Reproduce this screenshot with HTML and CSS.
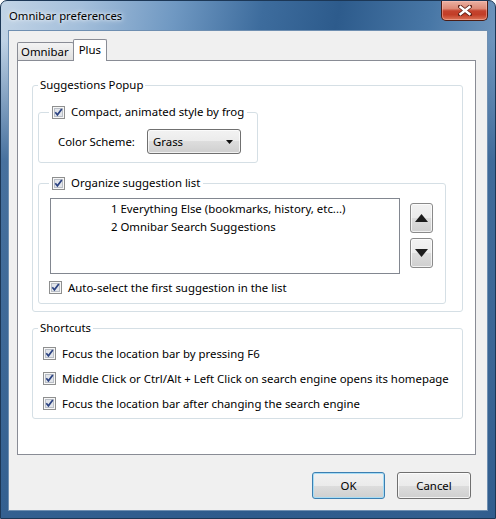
FILE: index.html
```html
<!DOCTYPE html>
<html>
<head>
<meta charset="utf-8">
<title>Omnibar preferences</title>
<link rel="stylesheet" href="styles.css">
</head>
<body>
<div class="window">
  <div class="titlebar">
    <span class="title">Omnibar preferences</span>
    <div class="close">
      <svg width="14" height="11" viewBox="0 0 14 11"><path d="M2 1.5 L12 9.5 M12 1.5 L2 9.5" stroke="#5a1e14" stroke-width="4" stroke-linecap="round"/><path d="M2.5 2 L11.5 9 M11.5 2 L2.5 9" stroke="#ffffff" stroke-width="2.4" stroke-linecap="square"/></svg>
    </div>
  </div>
  <div class="client">
    <div class="tabs">
      <div class="tab">Omnibar</div>
      <div class="tab active">Plus</div>
    </div>
    <div class="panel">
      <fieldset class="group main">
        <legend class="text-legend">Suggestions Popup</legend>
        <fieldset class="group sub compact">
          <legend class="chk-legend">
            <svg class="cb" width="13" height="13" viewBox="0 0 13 13"><rect x=".5" y=".5" width="12" height="12" fill="#f7f7f7" stroke="#8e8f8f"/><rect x="2.5" y="2.5" width="8" height="8" fill="#e2e5ea" stroke="#b9bec6"/><path d="M3.3 6.3 L5.4 8.8 L9.8 3" fill="none" stroke="#2b4282" stroke-width="1.7"/></svg>
            <span>Compact, animated style by frog</span>
          </legend>
          <div class="scheme-row">
            <span class="scheme-label">Color Scheme:</span>
            <div class="combo">
              <span>Grass</span>
              <svg width="7" height="4" viewBox="0 0 7 4"><path d="M0 0 H7 L3.5 4 Z" fill="#111"/></svg>
            </div>
          </div>
        </fieldset>
        <fieldset class="group sub organize">
          <legend class="chk-legend">
            <svg class="cb" width="13" height="13" viewBox="0 0 13 13"><rect x=".5" y=".5" width="12" height="12" fill="#f7f7f7" stroke="#8e8f8f"/><rect x="2.5" y="2.5" width="8" height="8" fill="#e2e5ea" stroke="#b9bec6"/><path d="M3.3 6.3 L5.4 8.8 L9.8 3" fill="none" stroke="#2b4282" stroke-width="1.7"/></svg>
            <span>Organize suggestion list</span>
          </legend>
          <div class="list-row">
            <div class="listbox">
              <div class="item">1 Everything Else (bookmarks, history, etc...)</div>
              <div class="item">2 Omnibar Search Suggestions</div>
            </div>
            <div class="arrows">
              <div class="arrow-btn"><svg width="13" height="8" viewBox="0 0 13 8"><path d="M0 8 H13 L6.5 0 Z" fill="#1c1c1c"/></svg></div>
              <div class="arrow-btn"><svg width="13" height="8" viewBox="0 0 13 8"><path d="M0 0 H13 L6.5 8 Z" fill="#1c1c1c"/></svg></div>
            </div>
          </div>
          <div class="check auto">
            <svg class="cb" width="13" height="13" viewBox="0 0 13 13"><rect x=".5" y=".5" width="12" height="12" fill="#f7f7f7" stroke="#8e8f8f"/><rect x="2.5" y="2.5" width="8" height="8" fill="#e2e5ea" stroke="#b9bec6"/><path d="M3.3 6.3 L5.4 8.8 L9.8 3" fill="none" stroke="#2b4282" stroke-width="1.7"/></svg>
            <span>Auto-select the first suggestion in the list</span>
          </div>
        </fieldset>
      </fieldset>
      <fieldset class="group shortcuts">
        <legend class="text-legend">Shortcuts</legend>
        <div class="check">
          <svg class="cb" width="13" height="13" viewBox="0 0 13 13"><rect x=".5" y=".5" width="12" height="12" fill="#f7f7f7" stroke="#8e8f8f"/><rect x="2.5" y="2.5" width="8" height="8" fill="#e2e5ea" stroke="#b9bec6"/><path d="M3.3 6.3 L5.4 8.8 L9.8 3" fill="none" stroke="#2b4282" stroke-width="1.7"/></svg>
          <span>Focus the location bar by pressing F6</span>
        </div>
        <div class="check">
          <svg class="cb" width="13" height="13" viewBox="0 0 13 13"><rect x=".5" y=".5" width="12" height="12" fill="#f7f7f7" stroke="#8e8f8f"/><rect x="2.5" y="2.5" width="8" height="8" fill="#e2e5ea" stroke="#b9bec6"/><path d="M3.3 6.3 L5.4 8.8 L9.8 3" fill="none" stroke="#2b4282" stroke-width="1.7"/></svg>
          <span>Middle Click or Ctrl/Alt + Left Click on search engine opens its homepage</span>
        </div>
        <div class="check">
          <svg class="cb" width="13" height="13" viewBox="0 0 13 13"><rect x=".5" y=".5" width="12" height="12" fill="#f7f7f7" stroke="#8e8f8f"/><rect x="2.5" y="2.5" width="8" height="8" fill="#e2e5ea" stroke="#b9bec6"/><path d="M3.3 6.3 L5.4 8.8 L9.8 3" fill="none" stroke="#2b4282" stroke-width="1.7"/></svg>
          <span>Focus the location bar after changing the search engine</span>
        </div>
      </fieldset>
    </div>
    <div class="buttons">
      <div class="btn default">OK</div>
      <div class="btn">Cancel</div>
    </div>
  </div>
</div>
</body>
</html>
```
FILE: styles.css
```css
* { box-sizing: border-box; }
html, body { margin: 0; padding: 0; }
body {
  width: 496px;
  height: 519px;
  overflow: hidden;
  font-family: "Noto Sans", "Open Sans", sans-serif;
  font-size: 11.4px;
  color: #000;
  background: #ffffff;
}

.window {
  width: 496px;
  height: 519px;
  display: flex;
  flex-direction: column;
  border: 1px solid #1c3756;
  border-radius: 7px 7px 0 0;
  padding: 0 7px 7px 7px;
  background:
    linear-gradient(to bottom, rgba(43, 88, 136, 0) 0px, rgba(43, 88, 136, 0) 40px, rgba(52, 97, 146, 0.85) 160px, rgba(46, 91, 140, 0.95) 519px),
    linear-gradient(100deg, #c2d4e6 0%, #a4bfdb 14%, #6f98c2 30%, #3d6c9d 45%, #2d5b8c 58%, #4877a6 74%, #6f95bd 86%, #9bb6d2 95%, #5d86b2 100%);
}

.titlebar {
  height: 29px;
  display: flex;
  justify-content: space-between;
  align-items: flex-start;
}
.title {
  margin: 7px 0 0 1px;
  font-size: 11.3px;
  line-height: 16px;
  color: #000;
  text-shadow: 0 0 6px rgba(255, 255, 255, 0.95), 0 0 3px rgba(255, 255, 255, 0.9);
}
.close {
  width: 47px;
  height: 20px;
  border: 1px solid #4b1c14;
  border-top: none;
  border-radius: 0 0 5px 5px;
  background: linear-gradient(to bottom, #eab1a3 0%, #dd8a77 40%, #c4432e 52%, #c23d27 72%, #dc7558 100%);
  box-shadow: inset 0 0 0 1px rgba(255, 200, 190, 0.45);
  display: flex;
  align-items: center;
  justify-content: center;
}

.client {
  flex: 1;
  display: flex;
  flex-direction: column;
  background: #f0f0f0;
  border: 1px solid #6f8fb1;
  padding: 8px 11px 0 8px;
}

.tabs {
  height: 21px;
  display: flex;
  align-items: flex-end;
  position: relative;
  z-index: 1;
}
.tab {
  height: 18px;
  padding: 0 4px 0 3px;
  line-height: 17px;
  border: 1px solid #898c95;
  border-bottom: none;
  border-radius: 2px 2px 0 0;
  background: linear-gradient(to bottom, #f3f3f3, #e0e0e0);
}
.tab.active {
  height: 22px;
  margin-bottom: -1px;
  margin-left: -1px;
  padding: 0 5px 0 5px;
  line-height: 19px;
  background: #ffffff;
}

.panel {
  height: 395px;
  background: #ffffff;
  border: 1px solid #898c95;
  padding: 0 12px 0 14px;
}

.group {
  margin: 0;
  padding: 0;
  min-width: 0;
  border: 1px solid #d5dfe5;
  border-radius: 3px;
}
.text-legend {
  margin-left: 5px;
  padding: 0 2px;
  line-height: 16px;
  white-space: nowrap;
}
.chk-legend {
  margin-left: 10px;
  padding: 0 3px;
  height: 16px;
  width: max-content;
  display: flex;
  align-items: center;
  gap: 6px;
  line-height: 16px;
  white-space: nowrap;
}
.cb { display: block; flex: none; }

.main {
  margin-top: 16px;
  padding: 0 0 7px 0;
}
.sub { margin-left: 5px; }
.compact {
  width: 220px;
  margin-top: 11px;
  padding: 0 0 8px 0;
}
.scheme-row {
  margin-top: 9px;
  padding-left: 19px;
  display: flex;
  align-items: center;
}
.scheme-label {
  width: 89px;
}
.combo {
  width: 94px;
  height: 25px;
  border: 1px solid #707070;
  border-radius: 3px;
  background: linear-gradient(to bottom, #f2f2f2 0%, #ebebeb 50%, #dddddd 50%, #cfcfcf 100%);
  box-shadow: inset 0 0 0 1px rgba(255, 255, 255, 0.7);
  display: flex;
  align-items: center;
  justify-content: space-between;
  padding: 0 7px 0 5px;
}

.organize {
  width: 408px;
  margin-top: 12px;
  padding: 0 0 8px 0;
}
.list-row {
  margin-top: 7px;
  display: flex;
  align-items: flex-start;
}
.listbox {
  margin-left: 11px;
  width: 350px;
  height: 76px;
  border: 1px solid #828790;
  background: #ffffff;
  padding-top: 1px;
}
.item {
  height: 18px;
  line-height: 18px;
  padding-left: 60px;
  white-space: nowrap;
}
.arrows {
  margin-left: 10px;
  margin-top: 5px;
  display: flex;
  flex-direction: column;
  gap: 5px;
}
.arrow-btn {
  width: 23px;
  height: 30px;
  border: 1px solid #8a8a8a;
  border-radius: 3px;
  background: linear-gradient(to bottom, #f2f2f2 0%, #ebebeb 50%, #dddddd 50%, #cfcfcf 100%);
  box-shadow: inset 0 0 0 1px rgba(255, 255, 255, 0.7);
  display: flex;
  align-items: center;
  justify-content: center;
}

.check {
  height: 16px;
  display: flex;
  align-items: center;
  gap: 6px;
  white-space: nowrap;
}
.auto {
  margin-top: 5px;
  margin-left: 10px;
}

.shortcuts {
  margin-top: 8px;
  padding: 9px 0 7px 0;
  display: flex;
  flex-direction: column;
  gap: 9px;
}
.shortcuts > .check { margin-left: 10px; }

.buttons {
  margin-top: 17px;
  padding-right: 5px;
  display: flex;
  justify-content: flex-end;
  gap: 12px;
}
.btn {
  width: 73px;
  height: 27px;
  border: 1px solid #707070;
  border-radius: 3px;
  background: linear-gradient(to bottom, #f2f2f2 0%, #ebebeb 50%, #dddddd 50%, #cfcfcf 100%);
  box-shadow: inset 0 0 0 1px rgba(255, 255, 255, 0.75);
  display: flex;
  align-items: center;
  justify-content: center;
}
.btn.default {
  border-color: #3c7fb1;
  box-shadow: inset 0 0 0 1px #a6dcf5;
}
.btn + .btn { width: 74px; }
```
